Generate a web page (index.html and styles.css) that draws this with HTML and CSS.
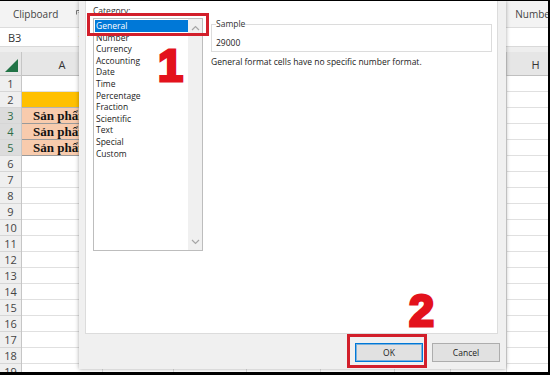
FILE: index.html
```html
<!DOCTYPE html>
<html lang="vi">
<head>
<meta charset="utf-8">
<title>Format Cells</title>
<link rel="stylesheet" href="styles.css">
</head>
<body>
<div class="screen">
  <div class="ribbon">
    <span class="grp">Clipboard</span>
    <svg class="launcher" width="8" height="8" viewBox="0 0 8 8"><path d="M0.5 0.5H7.5V7.5" fill="none" stroke="#777" stroke-width="1"/><path d="M0.5 0.5V4.5M2.5 2.5L6 6M6 3.5V6H3.5" fill="none" stroke="#777" stroke-width="1"/></svg>
    <span class="grp grp-num">Number</span>
  </div>
  <div class="fbar"><span class="namebox">B3</span><span class="nb-arrow">▾</span></div>
  <div class="gap"></div>
  <div class="sheet">
    <div class="corner"><svg width="16" height="15" viewBox="0 0 16 15"><polygon points="15,1 15,14 2,14" fill="#217346"/></svg></div>
    <div class="ch">A</div><div class="ch">B</div><div class="ch">C</div><div class="ch">D</div><div class="ch">E</div><div class="ch">F</div><div class="ch">G</div><div class="ch">H</div>
    <div class="rows">
      <div class="rh">1</div><div class="rh">2</div><div class="rh sel">3</div><div class="rh sel">4</div><div class="rh sel">5</div>
      <div class="rh">6</div><div class="rh">7</div><div class="rh">8</div><div class="rh">9</div><div class="rh">10</div>
      <div class="rh">11</div><div class="rh">12</div><div class="rh">13</div><div class="rh">14</div><div class="rh">15</div>
      <div class="rh">16</div><div class="rh">17</div><div class="rh">18</div><div class="rh">19</div>
    </div>
    <div class="col col-a">
      <div class="cell"></div>
      <div class="cell gold"></div>
      <div class="cell peach">Sản phẩm</div>
      <div class="cell peach">Sản phẩm</div>
      <div class="cell peach">Sản phẩm</div>
    </div>
    <div class="col"></div><div class="col"></div><div class="col"></div><div class="col"></div><div class="col"></div><div class="col"></div><div class="col"></div>
  </div>

  <div class="dialog">
    <div class="panel">
      <div class="left">
        <div class="lbl">Category:</div>
        <div class="listbox">
          <ul class="items">
            <li class="on">General</li>
            <li>Number</li>
            <li>Currency</li>
            <li>Accounting</li>
            <li>Date</li>
            <li>Time</li>
            <li>Percentage</li>
            <li>Fraction</li>
            <li>Scientific</li>
            <li>Text</li>
            <li>Special</li>
            <li>Custom</li>
          </ul>
          <div class="vscroll">
            <svg width="9" height="6" viewBox="0 0 9 6"><path d="M1 5L4.5 1.5L8 5" fill="none" stroke="#a6a6a6" stroke-width="1.2"/></svg>
            <svg width="9" height="6" viewBox="0 0 9 6"><path d="M1 1L4.5 4.5L8 1" fill="none" stroke="#a6a6a6" stroke-width="1.2"/></svg>
          </div>
        </div>
      </div>
      <div class="right">
        <fieldset class="sample">
          <legend>Sample</legend>
          <div class="val">29000</div>
        </fieldset>
        <p class="desc">General format cells have no specific number format.</p>
      </div>
    </div>
    <div class="footer">
      <button class="btn ok">OK</button>
      <button class="btn">Cancel</button>
    </div>
  </div>

  <div class="mark mark1"></div>
  <div class="mark mark2"></div>
  <div class="num num1">1</div>
  <div class="num num2">2</div>
</div>
</body>
</html>
```
FILE: styles.css
```css
* { box-sizing: border-box; }
html, body { margin: 0; padding: 0; }
body { background: #000; width: 550px; height: 375px; overflow: hidden; }

.screen {
  position: relative;
  width: 548px;
  height: 371px;
  margin: 1px 2px 3px 0;
  background: #fff;
  overflow: hidden;
  display: flex;
  flex-direction: column;
  font-family: "Open Sans", "Noto Sans", sans-serif;
}

.ribbon {
  height: 27px;
  flex: none;
  background: #f3f3f3;
  border-bottom: 1px solid #dcdcdc;
  display: flex;
  align-items: flex-start;
  padding: 7px 0 0 13px;
  font-size: 10px;
  color: #444;
}
.grp { line-height: 12px; }
.launcher { margin: 2px 0 0 18px; }
.grp-num { margin-left: auto; margin-right: -6px; }

.fbar {
  height: 19px;
  flex: none;
  display: flex;
  align-items: center;
  padding-left: 8px;
  font-size: 11px;
  color: #333;
  background: #fff;
  border-bottom: 1px solid #d9d9d9;
}
.nb-arrow { margin-left: 58px; font-size: 6px; color: #666; }

.gap { height: 5px; flex: none; background: #eeeeee; }

.sheet {
  flex: 1;
  display: grid;
  grid-template-columns: 22px 81px 71px 73px 74px 74px 56px 56px 58px;
  grid-template-rows: 24px 1fr;
  overflow: hidden;
  min-height: 0;
}
.corner {
  background: #e6e6e6;
  border-right: 1px solid #c6c6c6;
  border-bottom: 1px solid #c6c6c6;
  display: flex;
  align-items: flex-end;
  justify-content: flex-start;
  padding: 0 0 2px 3px;
}
.ch {
  background: #e6e6e6;
  border-right: 1px solid #cfcfcf;
  border-bottom: 1px solid #c0c0c0;
  font-size: 11px;
  color: #333;
  display: flex;
  align-items: flex-end;
  justify-content: center;
  padding-bottom: 3px;
}
.rows { background: #efefef; border-right: 1px solid #c6c6c6; }
.rh {
  height: 16px;
  border-bottom: 1px solid #d6d6d6;
  font-size: 11px;
  line-height: 15px;
  color: #444;
  text-align: center;
}
.rh.sel { background: #dcdcdc; color: #2f6b47; }

.col {
  border-right: 1px solid #e0e0e0;
  background: repeating-linear-gradient(to bottom, #fff 0 15px, #e0e0e0 15px 16px);
}
.cell { height: 16px; border-bottom: 1px solid #e0e0e0; background: #fff; }
.cell.gold { background: #ffc000; border-bottom-color: #b3b3b3; }
.cell.peach {
  background: #f8cbad;
  border-bottom-color: #9a9a9a;
  font-family: "Liberation Serif", serif;
  font-weight: bold;
  font-size: 13px;
  line-height: 15px;
  color: #111;
  padding-left: 11px;
  white-space: nowrap;
}

/* dialog */
.dialog {
  position: absolute;
  left: 79px;
  top: 0;
  width: 427px;
  height: 368px;
  background: #f0f0f0;
  box-shadow: 0 0 4px rgba(0,0,0,0.35);
  padding: 0 8px 0 6px;
  display: flex;
  flex-direction: column;
  font-family: "Open Sans", "Noto Sans", sans-serif;
  font-size: 8.5px;
  color: #222;
}
.panel {
  height: 333px;
  flex: none;
  background: #fff;
  border: 1px solid #dcdcdc;
  border-top: none;
  display: flex;
  gap: 8px;
  padding: 4px 5px 0 7px;
}
.left { width: 110px; flex: none; }
.lbl { line-height: 12px; color: #333; }
.listbox {
  margin-top: 1px;
  height: 233px;
  border: 1px solid #bdbdbd;
  display: flex;
}
.items {
  list-style: none;
  margin: 0;
  padding: 1px 0 0 1px;
  flex: 1;
}
.items li { line-height: 11.6px; padding-left: 1px; color: #222; }
.items li.on { background: #0078d7; color: #fff; }
.vscroll {
  width: 14px;
  background: #f0f0f0;
  display: flex;
  flex-direction: column;
  justify-content: space-between;
  align-items: center;
  padding: 6px 0 5px;
}

.right { flex: 1; }
.sample {
  margin: 14px 0 0;
  padding: 8px 4px 3px;
  border: 1px solid #dcdcdc;
  min-width: 0;
}
.sample legend { padding: 0; line-height: 10px; color: #333; }
.val { line-height: 11px; color: #222; }
.desc { margin: 4px 0 0; line-height: 11px; color: #222; }

.footer {
  flex: 1;
  display: flex;
  justify-content: flex-end;
  align-items: flex-start;
  gap: 9px;
  padding-top: 9px;
  margin-right: -2px;
}
.btn {
  width: 68px;
  height: 19px;
  padding: 0;
  background: #e1e1e1;
  border: 1px solid #adadad;
  font-family: "Open Sans", "Noto Sans", sans-serif;
  font-size: 8.5px;
  color: #222;
}
.btn.ok { border-color: #0078d7; box-shadow: inset 0 0 0 1px rgba(0,120,215,0.45); }

/* annotations */
.mark { position: absolute; border: 3px solid #d21f2b; }
.mark1 { left: 87px; top: 12px; width: 122px; height: 23px; }
.mark2 { left: 347px; top: 333px; width: 80px; height: 34px; }
.num {
  position: absolute;
  font-family: "Liberation Sans", Arial, sans-serif;
  font-weight: bold;
  font-size: 45px;
  line-height: 45px;
  color: #e3121c;
  -webkit-text-stroke: 3px #e3121c;
}
.num1 { left: 158px; top: 42px; }
.num2 { left: 409px; top: 287px; }
```
